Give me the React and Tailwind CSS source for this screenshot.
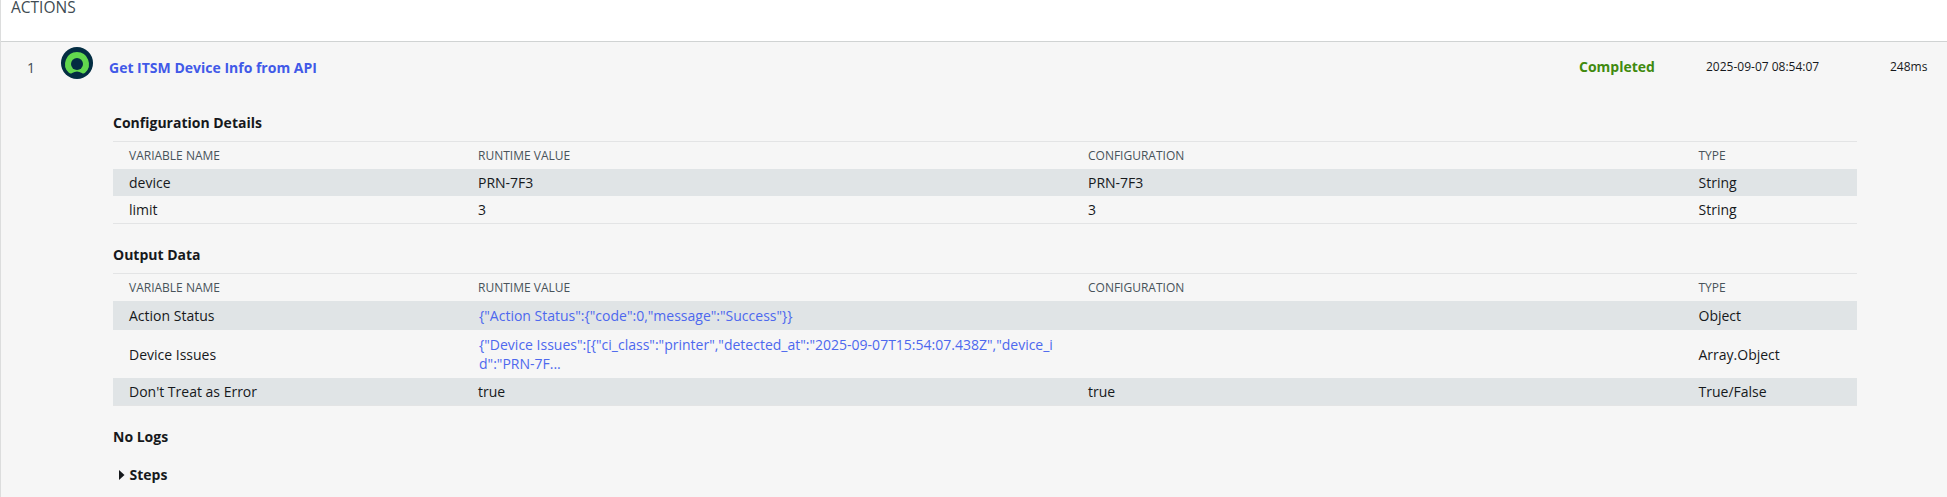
const HEADS = ["VARIABLE NAME", "RUNTIME VALUE", "CONFIGURATION", "TYPE"];
const GRID = "grid grid-cols-[349px_610px_610.5px_1fr] items-center pl-4";

function DataTable({ title, rows, className }) {
  return (
    <section className={className}>
      <h3 className="h-[18px] text-[14px] leading-[18px] font-bold">{title}</h3>
      <div className="mt-[9px] border-y border-[#e3e4e5]">
        <div className={`${GRID} h-[27px] text-[12px] text-[#48535a]`}>
          {HEADS.map((h) => <span key={h}>{h}</span>)}
        </div>
        {rows.map((r, i) => (
          <div key={r.name} className={`${GRID} ${r.h} text-[14px] leading-[19px] ${i % 2 ? "" : "bg-[#e0e4e6]"}`}>
            <span>{r.name}</span>
            <span className={r.link ? "pl-px whitespace-pre text-[#4d68ee]" : ""}>{r.value}</span>
            <span>{r.config}</span>
            <span>{r.type}</span>
          </div>
        ))}
      </div>
    </section>
  );
}

export default function App() {
  return (
    <div className="h-[497px] w-[1947px] overflow-hidden border-l border-[#dcdddd] bg-white font-['Open_Sans',sans-serif] text-[#16191c]">
      <header className="h-[41px] pl-[10px] text-[15.5px] leading-[15px] text-[#404b52]">ACTIONS</header>
      <main className="h-[456px] border-t border-[#d0d3d3] bg-[#f6f6f6]">
        <div className="flex h-[50px] items-center text-[14px]">
          <span className="w-[60px] pl-[26px] text-[#404b52]">1</span>
          <svg className="mb-2 size-8" viewBox="0 0 32 32">
            <circle cx="16" cy="16" r="16" fill="#032d42" />
            <path d="M16 5A12 12 0 0 0 7.9 25.8Q9.4 27.2 11.2 26Q16 22.8 20.8 26Q22.6 27.2 24.1 25.8A12 12 0 0 0 16 5Z" fill="#62d84e" />
            <circle cx="16" cy="17" r="6" fill="#032d42" />
          </svg>
          <span className="ml-4 flex-1 font-bold text-[#4159e8]">Get ITSM Device Info from API</span>
          <span className="mb-[2px] w-[127px] font-bold text-[#418a0e]">Completed</span>
          <span className="w-[184px] text-[12px]">2025-09-07 08:54:07</span>
          <span className="w-[57px] text-[12px]">248ms</span>
        </div>
        <div className="ml-[112px] w-[1744px]">
          <DataTable className="pt-[22px]" title="Configuration Details" rows={[
            { name: "device", value: "PRN-7F3", config: "PRN-7F3", type: "String", h: "h-[27px]" },
            { name: "limit", value: "3", config: "3", type: "String", h: "h-[27px]" },
          ]} />
          <DataTable className="pt-[22px]" title="Output Data" rows={[
            { name: "Action Status", value: '{"Action Status":{"code":0,"message":"Success"}}', link: true, type: "Object", h: "h-[29px]" },
            { name: "Device Issues", value: '{"Device Issues":[{"ci_class":"printer","detected_at":"2025-09-07T15:54:07.438Z","device_i\nd":"PRN-7F...', link: true, type: "Array.Object", h: "h-[48px]" },
            { name: "Don't Treat as Error", value: "true", config: "true", type: "True/False", h: "h-[27px]" },
          ]} />
          <h3 className="pt-[21px] text-[14px] leading-[19px] font-bold">No Logs</h3>
          <div className="flex items-center gap-[5px] pt-[19px] pl-[6px] text-[14px] leading-[19px] font-bold">
            <svg className="h-[10px] w-[5.5px]" viewBox="0 0 5 9" preserveAspectRatio="none"><path d="M0 0L5 4.5L0 9Z" fill="#16191c" /></svg>
            Steps
          </div>
        </div>
      </main>
    </div>
  );
}
